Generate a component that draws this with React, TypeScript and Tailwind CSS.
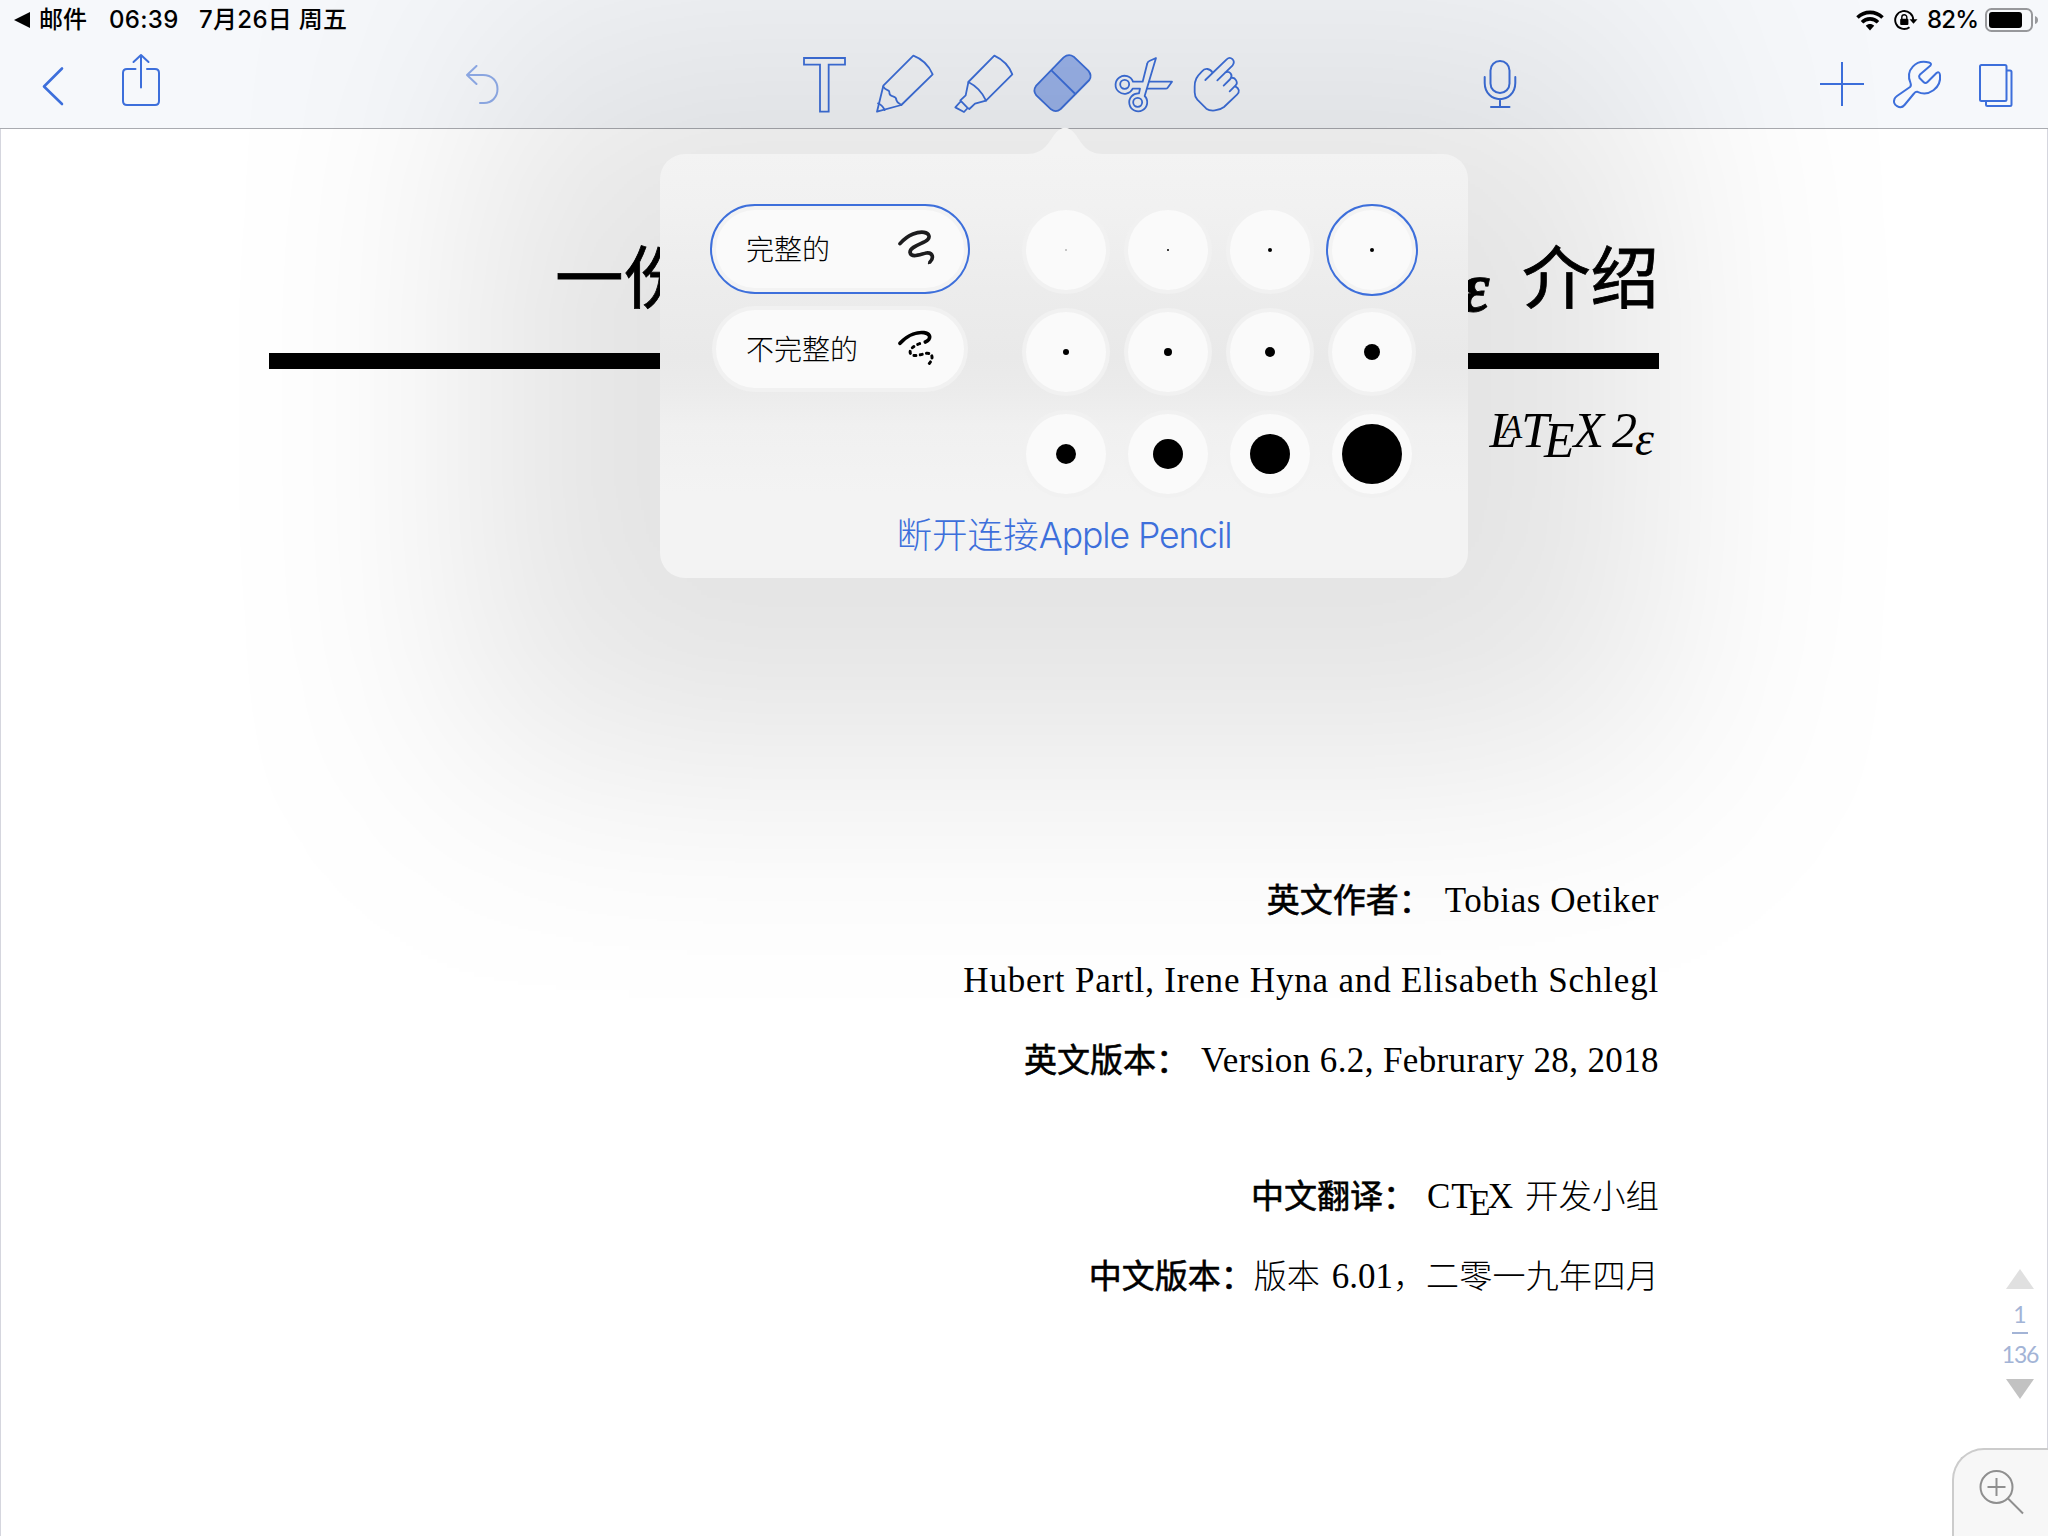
import type { ReactNode } from "react";

const BLUE = "#3d6fdb";

/* Icons share the page's coordinate space: each one shows the 88px tall toolbar strip from x to x + w. */
function Icon({ x, w, className, children }: { x: number; w: number; className: string; children: ReactNode }) {
  return (
    <svg
      viewBox={`${x} 40 ${w} 88`}
      width={w}
      height={88}
      className={`shrink-0 ${className}`}
      fill="none"
      stroke={BLUE}
      strokeWidth={2}
      strokeLinecap="round"
      strokeLinejoin="round"
    >
      {children}
    </svg>
  );
}

function Tool({ children }: { children: ReactNode }) {
  return (
    <g transform="translate(780 40) scale(0.33333)" strokeWidth={5.4}>
      {children}
    </g>
  );
}

function StatusBar() {
  return (
    <div className="flex h-10 items-start pt-[5px] text-[24px] leading-[30px] font-medium text-black [font-family:Inter,'Noto_Sans_CJK_SC',sans-serif]">
      <svg width="16" height="16" viewBox="0 0 16 16" className="mt-[7px] ml-[14px] shrink-0">
        <path d="M0 8 16 0V16Z" />
      </svg>
      <span className="ml-[9px] w-[70px] whitespace-nowrap">邮件</span>
      <span className="w-[90px] whitespace-nowrap tracking-[0.300px]">06:39</span>
      <span className="whitespace-nowrap tracking-[0.300px]">7月26日 周五</span>
      <svg width="28" height="21" viewBox="0 0 28 21" className="mt-[5px] mr-[10px] ml-auto shrink-0">
        <g fill="none" stroke="#000" strokeWidth="3.6">
          <path d="M1.5 7.5C8.5 .6 19.5 .6 26.500 7.500" />
          <path d="M6 12.200C10.500 7.800 17.500 7.800 22 12.200" />
        </g>
        <path d="M14 20.500 9.800 15.800C12 13.500 16 13.500 18.200 15.800Z" />
      </svg>
      <svg width="24" height="22" viewBox="0 0 24 22" className="mt-[4px] mr-[9px] shrink-0" fill="none" stroke="#000" strokeWidth="1.900">
        <path d="M19.200 11.500A9 9 0 1 0 15.500 18.300" />
        <path d="M15.500 10.300H23.500L19.500 14.800Z" fill="#000" stroke="none" />
        <rect x="6.200" y="9.800" width="8.200" height="6.200" rx="1" fill="#000" stroke="none" />
        <path d="M7.800 10V8.200A2.500 2.500 0 0 1 12.800 8.200V10" strokeWidth="1.400" />
      </svg>
      <span className="w-[58px] whitespace-nowrap tracking-[-0.8px]">82%</span>
      <svg width="54" height="24" viewBox="0 0 54 24" className="mt-[3px] mr-[9px] shrink-0">
        <rect x="1" y="1" width="46" height="22" rx="5.500" fill="none" stroke="#97989b" strokeWidth="2" />
        <rect x="4" y="4" width="33" height="16" rx="3" />
        <path d="M50 8V16Q53 15 53 12T50 8Z" fill="#97989b" />
      </svg>
    </div>
  );
}

function Toolbar() {
  return (
    <div className="flex h-[88px]">
      <Icon x={40} w={28} className="ml-[40px]">
        <path d="M62 68.500 44 86.500 62 104" strokeWidth="2.600" />
      </Icon>
      <Icon x={118} w={46} className="ml-[50px]">
        <path d="M135.500 69H127Q123 69 123 73V101Q123 105 127 105H155Q159 105 159 101V73Q159 69 155 69H147M141 87.500V56M133.500 62 141 55 148.500 62" />
      </Icon>
      <Icon x={462} w={40} className="ml-[298px] opacity-55">
        <path d="M476.500 66 467 75 476.500 84M467 75H483C492 75 497.500 81 497.500 89S492 103 484 103H480" />
      </Icon>
      <Icon x={800} w={50} className="ml-[298px]">
        <Tool>
          <path d="M72 54H195V74H146V215H120V74H72Z" strokeLinejoin="miter" />
        </Tool>
      </Icon>
      <Icon x={872} w={66} className="ml-[22px]">
        <Tool>
          <path d="M400 47Q440 62 458 103L364 195 291 215 310 137Z" />
          <path d="M310 140C316 154 328 148 328 156C327 176 350 162 349 180C352 190 358 190 364 195M294 190C301 192 310 202 314 210" />
        </Tool>
      </Icon>
      <Icon x={950} w={68} className="ml-[12px]">
        <Tool>
          <path d="M643 47Q682 65 697 103L618 182Q602 145 565 126Z" />
          <path d="M565 127 557 166 541 181 562 203 568 207 585 191 618 182M541 181 543 183 526 202 552 216 563 204" />
        </Tool>
      </Icon>
      <Icon x={1030} w={66} className="ml-[12px]">
        <Tool>
          <path
            d="M851 52Q866 40 881 50L925 92Q937 107 928 120L842 207Q828 219 813 208L769 166Q758 152 768 138Z"
            fill="#9cb5ec"
          />
          <path d="M815 92 886 162" />
        </Tool>
      </Icon>
      <Icon x={1110} w={68} className="ml-[14px]">
        <Tool>
          <circle cx="1034" cy="133" r="13.500" />
          <circle cx="1073" cy="187" r="13.500" />
          <path d="M1059 125A27 27 0 1 0 1058 146H1080L1077 160A27 27 0 1 0 1094 168L1128 54 1108 63Q1103 65 1102 70L1088 125Z" />
          <path d="M1107 125H1176L1163 143Q1161 146 1157 146H1102" />
        </Tool>
      </Icon>
      <Icon x={1190} w={54} className="ml-[12px]">
        <Tool>
          <path d="M1276 120 1340 58C1352 47 1368 62 1358 76L1312 121M1336 97C1350 91 1360 106 1351 117L1331 137M1352 114C1367 110 1376 129 1366 137L1349 154M1366 139C1378 145 1380 156 1371 164L1332 201C1317 213 1291 215 1279 206L1252 179Q1244 170 1244 157V140C1244 120 1250 110 1266 94C1275 83 1290 85 1298 98" />
        </Tool>
      </Icon>
      <Icon x={1480} w={40} className="ml-[236px]">
        <rect x="1490.500" y="61" width="19" height="32" rx="9.500" />
        <path d="M1484.700 77V83C1485 104.500 1515 104.500 1515.300 83V77M1500 99V107M1491 107H1509.500" />
      </Icon>
      <Icon x={1816} w={52} className="ml-[296px]">
        <path d="M1820 84H1864M1842 62V106" strokeLinecap="butt" />
      </Icon>
      <Icon x={1890} w={55} className="ml-[22px]">
        <path d="M1930.500 65.500 1920 74.500Q1918.500 76 1919.500 78L1923.500 82Q1925.500 84 1927.500 82L1936.500 73Q1939.500 71 1940 75C1941.500 88 1928.500 97 1917.500 91.800Q1915.500 91.500 1914 93.500L1904.500 105C1900.500 110 1892 105 1894.500 99Q1895 97.500 1897 96L1910 87Q1911.500 85.500 1910.500 83C1905 70 1916 59 1929 62.500Q1932 63.500 1930.500 65.500Z" />
      </Icon>
      <Icon x={1975} w={41} className="ml-[30px]">
        <rect x="1980" y="65" width="26.500" height="36" rx="1.500" />
        <path d="M2007 70.500H2010Q2011.500 70.500 2011.500 72V104.500Q2011.500 106 2010 106H1987.500Q1986 106 1986 104.500V101" />
      </Icon>
    </div>
  );
}

function Latex() {
  return (
    <div className="flex h-[80px] items-baseline justify-end pr-[5px] text-[50px] leading-[80px] italic [font-family:'Liberation_Serif',serif]">
      <span>L</span>
      <span className="-ml-[16px] -translate-y-[9px] text-[34px]">A</span>
      <span className="-ml-[1px]">T</span>
      <span className="-ml-[5px] translate-y-[10px]">E</span>
      <span className="-ml-[1px]">X</span>
      <span className="ml-[8px]">2</span>
      <span className="-ml-[2px] translate-y-[8px] text-[48px]">ε</span>
    </div>
  );
}

function Document() {
  return (
    <main className="flex h-[1407px] flex-col border-x border-[#d5d6de] bg-white pr-[388px] pl-[268px] text-black">
      <h1 className="mt-[95px] flex h-[100px] text-[68.500px] leading-[100px] font-normal [-webkit-text-stroke:0.8px_#000] [font-family:'Noto_Sans_CJK_SC',sans-serif]">
        <span className="ml-[286px]">一份</span>
        <span className="ml-auto translate-y-[13px] text-[72px] font-bold italic [font-family:'Liberation_Serif',serif]">ε</span>
        <span className="ml-[32px]">介绍</span>
      </h1>
      <div className="mt-[29px] h-[16px] shrink-0 bg-black" />
      <div className="mt-[21px]">
        <Latex />
      </div>
      <div className="mt-[391px] text-right text-[35px] leading-[80px] whitespace-nowrap [font-family:'Liberation_Serif','Noto_Sans_CJK_SC',serif]">
        <p className="h-[80px]">
          <span className="text-[33px] font-normal [-webkit-text-stroke:0.6px_#000]">英文作者：</span>
          <span className="ml-[13px] tracking-[0.550px]">Tobias Oetiker</span>
        </p>
        <p className="h-[80px] tracking-[0.820px]">Hubert Partl, Irene Hyna and Elisabeth Schlegl</p>
        <p className="h-[80px]">
          <span className="text-[33px] font-normal [-webkit-text-stroke:0.6px_#000]">英文版本：</span>
          <span className="ml-[12px] tracking-[0.380px]">Version 6.2, Februrary 28, 2018</span>
        </p>
        <p className="mt-[56px] h-[80px]">
          <span className="text-[33px] font-normal [-webkit-text-stroke:0.6px_#000]">中文翻译：</span>
          <span className="ml-[11px] tracking-[0.800px]">CT</span>
          <span className="-ml-[4px] inline-block h-[80px] translate-y-[7px]">E</span>
          <span className="-ml-[3px]">X</span>
          <span className="ml-[12px] text-[33.500px] font-light">开发小组</span>
        </p>
        <p className="h-[80px] text-[33px] font-light">
          <span className="font-normal [-webkit-text-stroke:0.6px_#000]">中文版本：</span>版本
          <span className="ml-[12px] text-[35px] font-normal">6.01</span>，
          <span className="tracking-[0.300px]">二零一九年四月</span>
        </p>
      </div>
    </main>
  );
}

function Pill({ label, selected, children }: { label: string; selected?: boolean; children: ReactNode }) {
  return (
    <div
      className={
        selected
          ? "flex h-[90px] w-[260px] rounded-full border-2 border-[#3d6fdb] bg-[#f3f3f3] p-[4px]"
          : "mx-[2px] mt-[12px] flex h-[86px] w-[256px] rounded-full bg-[#f1f1f1] p-[4px]"
      }
    >
      <div className="flex flex-1 items-center justify-between rounded-full bg-[#fafafa] pr-[29px] pb-[2px] pl-[30px]">
        <span className="text-[28px] font-light whitespace-nowrap [font-family:'Noto_Sans_CJK_SC',sans-serif]">{label}</span>
        {children}
      </div>
    </div>
  );
}

const sizes = [2, 2, 3.5, 4, 6, 8, 10, 15.5, 20, 30, 40, 60];

function SizeGrid() {
  return (
    <div className="grid grid-cols-[repeat(4,102px)] grid-rows-[repeat(3,102px)]">
      {sizes.map((size, i) => (
        <div key={i} className="flex items-center justify-center">
          <div
            className={
              i === 3
                ? "flex size-[92px] items-center justify-center rounded-full border-2 border-[#3d6fdb] bg-[#f3f3f3]"
                : "flex size-[88px] items-center justify-center rounded-full bg-[#f1f1f1]"
            }
          >
            <div className="flex size-[80px] items-center justify-center rounded-full bg-[#fafafa]">
              <div
                className={i === 0 ? "rounded-full bg-[#b5b5b5]" : "rounded-full bg-black"}
                style={{ width: size, height: size }}
              />
            </div>
          </div>
        </div>
      ))}
    </div>
  );
}

/* Soft ambient shadow: two smooth fades multiplied together, wider than the popover on every side. */
function PopoverShade() {
  return (
    <div className="pointer-events-none absolute inset-0 bg-black/11 [mask-composite:intersect] [mask-image:linear-gradient(to_right,rgba(0,0,0,0)_185px,rgba(0,0,0,0.02)_245px,rgba(0,0,0,0.07)_302px,rgba(0,0,0,0.16)_360px,rgba(0,0,0,0.31)_417px,rgba(0,0,0,0.5)_475px,rgba(0,0,0,0.69)_533px,rgba(0,0,0,0.84)_590px,rgba(0,0,0,0.93)_648px,rgba(0,0,0,0.98)_705px,#000_765px,#000_1363px,rgba(0,0,0,0.98)_1423px,rgba(0,0,0,0.93)_1480px,rgba(0,0,0,0.84)_1538px,rgba(0,0,0,0.69)_1595px,rgba(0,0,0,0.5)_1653px,rgba(0,0,0,0.31)_1711px,rgba(0,0,0,0.16)_1768px,rgba(0,0,0,0.07)_1826px,rgba(0,0,0,0.02)_1883px,rgba(0,0,0,0)_1943px),linear-gradient(to_bottom,rgba(0,0,0,0.42)_0px,rgba(0,0,0,0.56)_55px,rgba(0,0,0,0.72)_120px,rgba(0,0,0,0.85)_180px,rgba(0,0,0,0.94)_240px,#000_310px,#000_480px,rgba(0,0,0,0.98)_540px,rgba(0,0,0,0.93)_597px,rgba(0,0,0,0.84)_650px,rgba(0,0,0,0.69)_705px,rgba(0,0,0,0.5)_762px,rgba(0,0,0,0.31)_820px,rgba(0,0,0,0.16)_877px,rgba(0,0,0,0.07)_935px,rgba(0,0,0,0.02)_992px,rgba(0,0,0,0)_1050px)]" />
  );
}

function EraserPopover() {
  return (
    <div className="absolute top-[154px] left-[660px] h-[424px] w-[808px] rounded-[25px] bg-[linear-gradient(to_bottom,#f3f3f3_0%,#f1f1f1_12%,#ececec_32%,#e9e9e9_48%,#ebebeb_55%,#f0f0f0_64%,#f3f3f3_80%)]">
      <svg className="absolute -top-[27px] left-[365px]" width="80" height="28" viewBox="1025 127 80 28">
        <path d="M1027 155V154C1045 154 1049 141 1056 132.500Q1065 123 1074 132.500C1081 141 1085 154 1103 154V155Z" fill="#f3f3f3" />
      </svg>
      <div className="flex pt-[45px] pl-[50px]">
        <div className="pt-[5px]">
          <Pill label="完整的" selected>
            <svg width="37" height="36" viewBox="744 274 111 108" fill="none" stroke="#1c1c1e" strokeWidth="11" strokeLinecap="round">
              <path d="M750 315C776 285 805 279 822 281C839 284 840 296 833 303C824 314 780 322 780 341C783 360 813 346 829 343C852 341 850 361 840 370" />
              <path d="M846 358Q843 368 836 374" strokeWidth="5" />
            </svg>
          </Pill>
          <Pill label="不完整的">
            <svg width="37" height="36" viewBox="744 571 111 108" fill="none" stroke="#000" strokeLinecap="round">
              <path d="M750 611C776 582 805 577 822 579C839 581 842 592 836 600Q832 605 826 607" strokeWidth="11" />
              <path d="M809 612C787 620 776 632 782 643C790 653 815 644 829 641C852 639 851 662 831 678" strokeWidth="9" strokeDasharray="6 13" />
            </svg>
          </Pill>
        </div>
        <div className="ml-[45px]">
          <SizeGrid />
        </div>
      </div>
      <p className="mt-[6px] text-center text-[35.600px] leading-[50px] font-light whitespace-nowrap text-[#3d6fdb] [font-family:Inter,'Noto_Sans_CJK_SC',sans-serif]">
        断开连接<span className="tracking-[-1.1px]">Apple Pencil</span>
      </p>
    </div>
  );
}

function Pager() {
  return (
    <div className="absolute top-[1269px] left-[1999px] flex w-[42px] flex-col items-center text-[23px] leading-[24px] text-[#a3b4d6] [font-family:Lato,sans-serif]">
      <svg width="28" height="20" viewBox="0 0 28 20">
        <path d="M14 0 28 20H0Z" fill="#e0e0e0" />
      </svg>
      <span className="mt-[13px]">1</span>
      <span className="mt-[6px] h-[2px] w-[16px] bg-[#a3b4d6]" />
      <span className="mt-[8px] tracking-[-1.200px]">136</span>
      <svg width="28" height="20" viewBox="0 0 28 20" className="mt-[13px]">
        <path d="M0 0H28L14 20Z" fill="#c2c2c2" />
      </svg>
    </div>
  );
}

export default function App() {
  return (
    <div className="relative h-[1536px] w-[2048px] overflow-hidden bg-white">
      <header className="h-[129px] border-b border-[#a9abb0] bg-[#f6f8fb]">
        <StatusBar />
        <Toolbar />
      </header>
      <Document />
      <PopoverShade />
      <EraserPopover />
      <Pager />
      <button className="absolute right-0 bottom-0 flex h-[88px] w-[96px] items-start rounded-tl-[32px] border-t-2 border-l-2 border-[#cccccc] bg-[#f7f7f7]">
        <svg width="48" height="48" viewBox="0 0 48 48" className="mt-[18px] ml-[24px]" fill="none" stroke="#8f8f8f" strokeWidth="2">
          <circle cx="18.500" cy="19" r="16" />
          <path d="M9.500 19H27.500M18.500 10V28M30 30.500 45 45.500" />
        </svg>
      </button>
    </div>
  );
}
